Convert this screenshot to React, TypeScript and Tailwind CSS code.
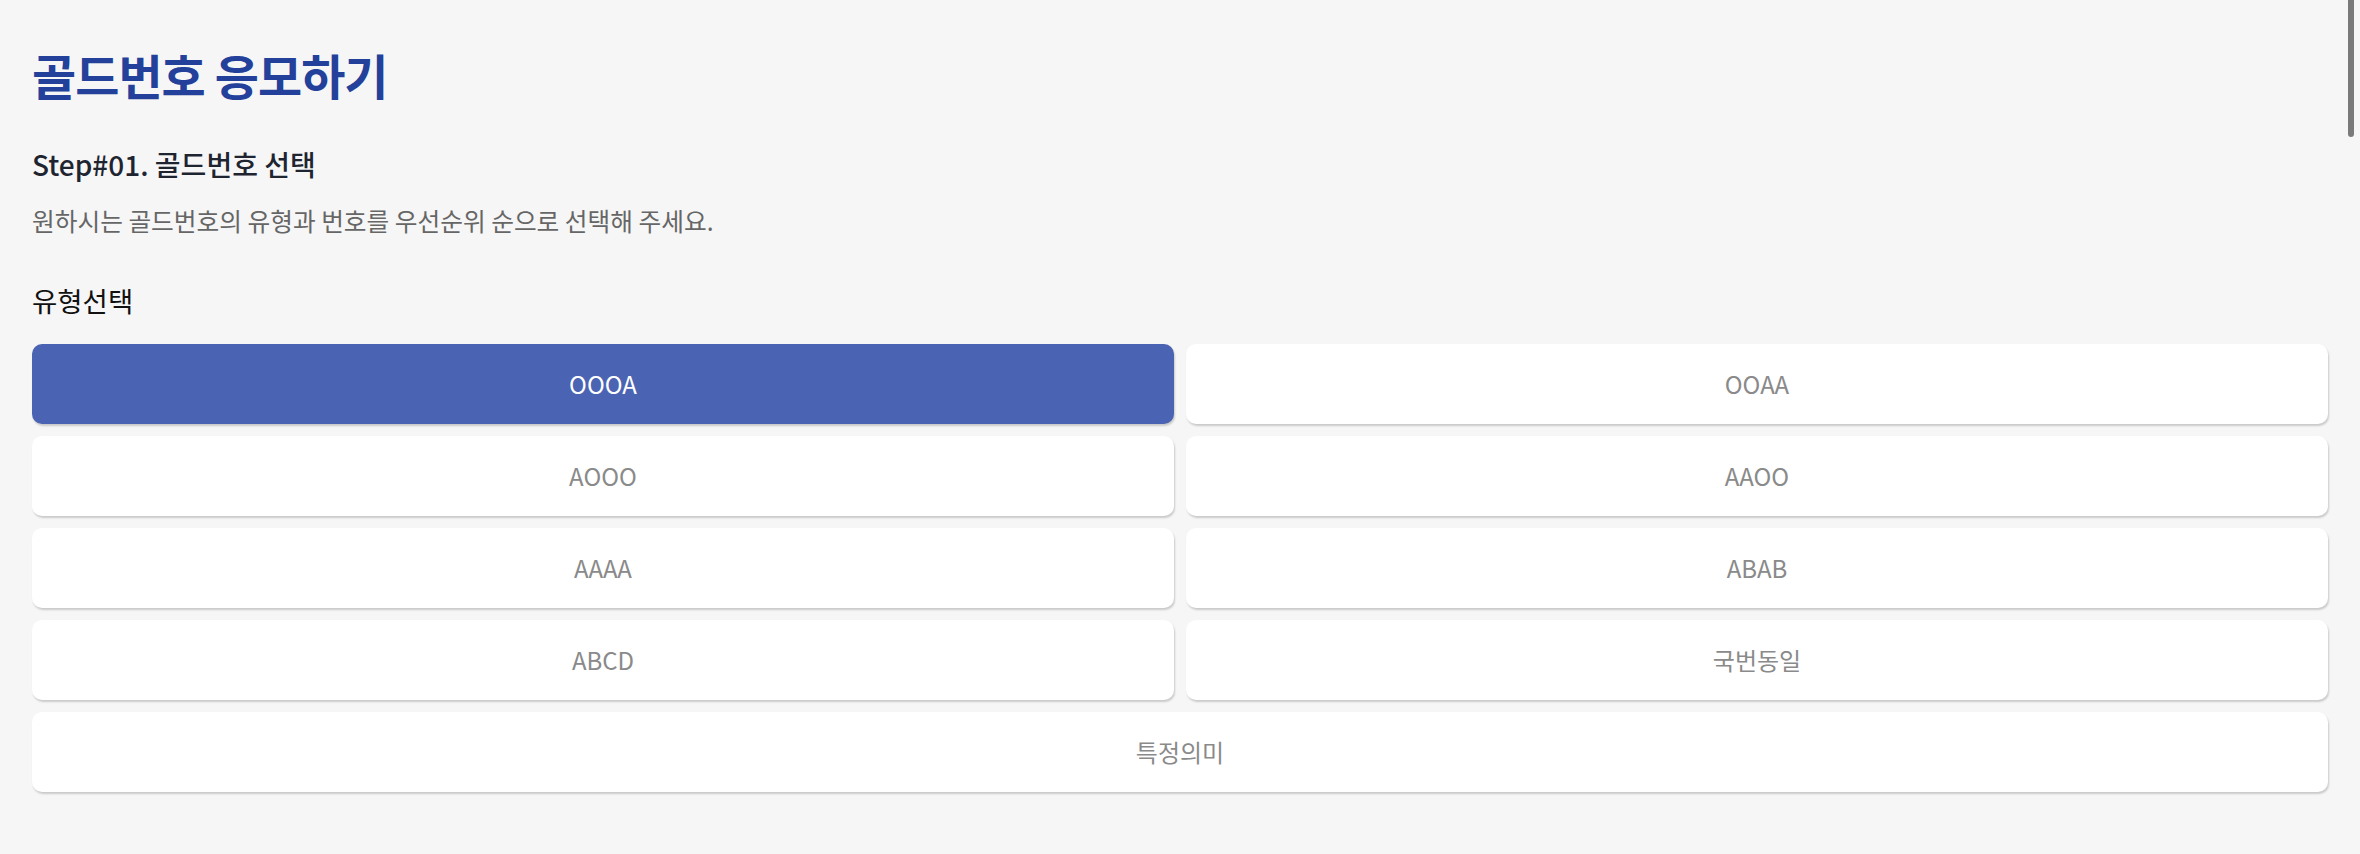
const TYPES = ['OOOA', 'OOAA', 'AOOO', 'AAOO', 'AAAA', 'ABAB', 'ABCD', '국번동일'];

function TypeButton({ label, active, wide }: { label: string; active?: boolean; wide?: boolean }) {
  return (
    <button
      className={`h-[80px] rounded-[10px] text-[24px] shadow-[1px_2px_2px_rgba(0,0,0,0.18)] ${wide ? 'col-span-2' : ''} ${
        active ? 'bg-[#4a63b2] text-white' : 'bg-white text-[#8a8a8a]'
      }`}
    >
      {label}
    </button>
  );
}

export default function App() {
  return (
    <main
      className="relative min-h-[854px] bg-[#f6f6f6] px-[32px] pt-[45px]"
      style={{ fontFamily: '"Noto Sans CJK KR", "Noto Sans", sans-serif' }}
    >
      <h1 className="text-[48px] font-semibold leading-[58px] tracking-[-0.02em] text-[#23409a]">골드번호 응모하기</h1>
      <h2 className="mt-[43px] text-[28px] font-medium leading-[36px] text-[#1e2430]">Step#01. 골드번호 선택</h2>
      <p className="mt-[22px] text-[24.7px] leading-[32px] text-[#666]">
        원하시는 골드번호의 유형과 번호를 우선순위 순으로 선택해 주세요.
      </p>
      <h3 className="mt-[46px] text-[27.5px] font-normal leading-[36px] text-[#111]">유형선택</h3>
      <div className="mt-[26px] grid grid-cols-2 gap-[12px]">
        {TYPES.map((t, i) => (
          <TypeButton key={t} label={t} active={i === 0} />
        ))}
        <TypeButton label="특정의미" wide />
      </div>
      {/* overlay scrollbar thumb seen in the capture */}
      <div className="absolute right-[6px] top-0 h-[137px] w-[6px] rounded-b-full bg-[#7a7a7a]" />
    </main>
  );
}
